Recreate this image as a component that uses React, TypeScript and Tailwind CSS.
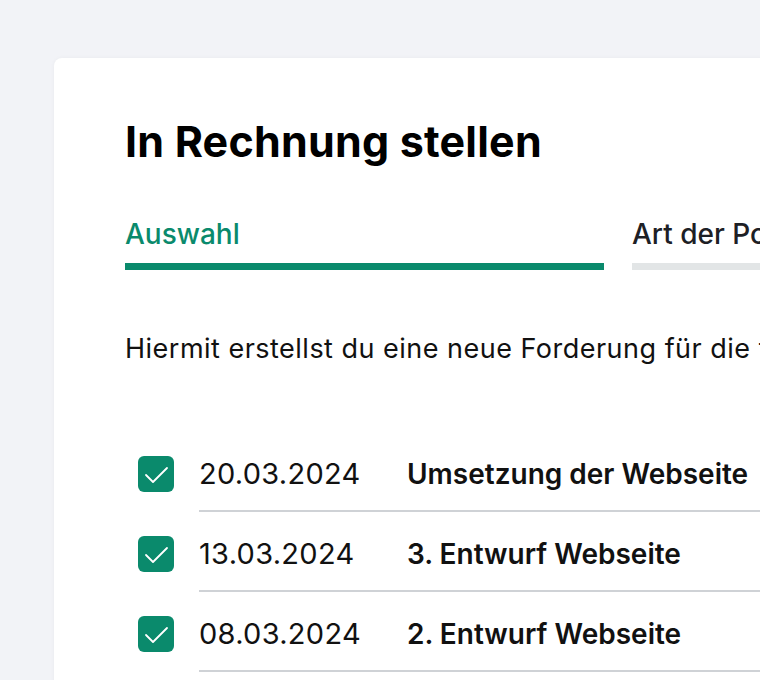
const ROWS = [
  { date: "20.03.2024", title: "Umsetzung der Webseite" },
  { date: "13.03.2024", title: "3. Entwurf Webseite" },
  { date: "08.03.2024", title: "2. Entwurf Webseite" },
];

function CheckMark() {
  return (
    <svg viewBox="0 0 36 36" className="h-[36px] w-[36px]" fill="none">
      <polyline points="8,19 15,26 29,12" stroke="white" strokeWidth="1.8" strokeLinecap="round" strokeLinejoin="round" />
    </svg>
  );
}

export default function App() {
  return (
    <div className="h-[680px] w-full overflow-hidden bg-[#f2f3f7] pl-[54px] pt-[58px] font-['Inter',sans-serif] text-[#111]">
      <div className="w-[1100px] min-h-[700px] rounded-lg bg-white pl-[71px] pt-[57px] shadow-[0_0_4px_rgba(0,0,0,0.04)]">
        <h1 className="text-[43px] font-bold leading-[52px] tracking-[0.005em] text-black">In Rechnung stellen</h1>

        {/* Steps */}
        <div className="mt-[49px] flex gap-[28px]">
          <div className="w-[479px] shrink-0">
            <div className="text-[28px] font-medium leading-[36px] text-[#0a8a6c]">Auswahl</div>
            <div className="mt-[11px] h-[7px] bg-[#0a8a6c]" />
          </div>
          <div className="w-[479px] shrink-0">
            <div className="text-[28px] font-medium leading-[36px] text-[#1d2025]">Art der Position</div>
            <div className="mt-[11px] h-[7px] bg-[#e2e5e6]" />
          </div>
        </div>

        <p className="mt-[61px] whitespace-nowrap text-[27px] leading-[36px] tracking-[0.018em]">
          Hiermit erstellst du eine neue Forderung für die folgenden Positionen.
        </p>

        <div className="mt-[65px]">
          {ROWS.map((r) => (
            <div key={r.date} className="flex items-start">
              <div className="ml-[13px] mt-[24px] h-[36px] w-[36px] shrink-0 rounded-[6px] bg-[#0a8a6c]">
                <CheckMark />
              </div>
              <div className="ml-[25px] flex h-[80px] flex-1 items-center border-b-2 border-[#cfd2d6] pt-[6px]">
                <div className="flex items-baseline">
                  <span className="w-[208px] text-[29px] leading-[36px] tracking-[0.01em]">{r.date}</span>
                  <span className="text-[28px] font-semibold leading-[36px]">{r.title}</span>
                </div>
              </div>
            </div>
          ))}
        </div>
      </div>
    </div>
  );
}
